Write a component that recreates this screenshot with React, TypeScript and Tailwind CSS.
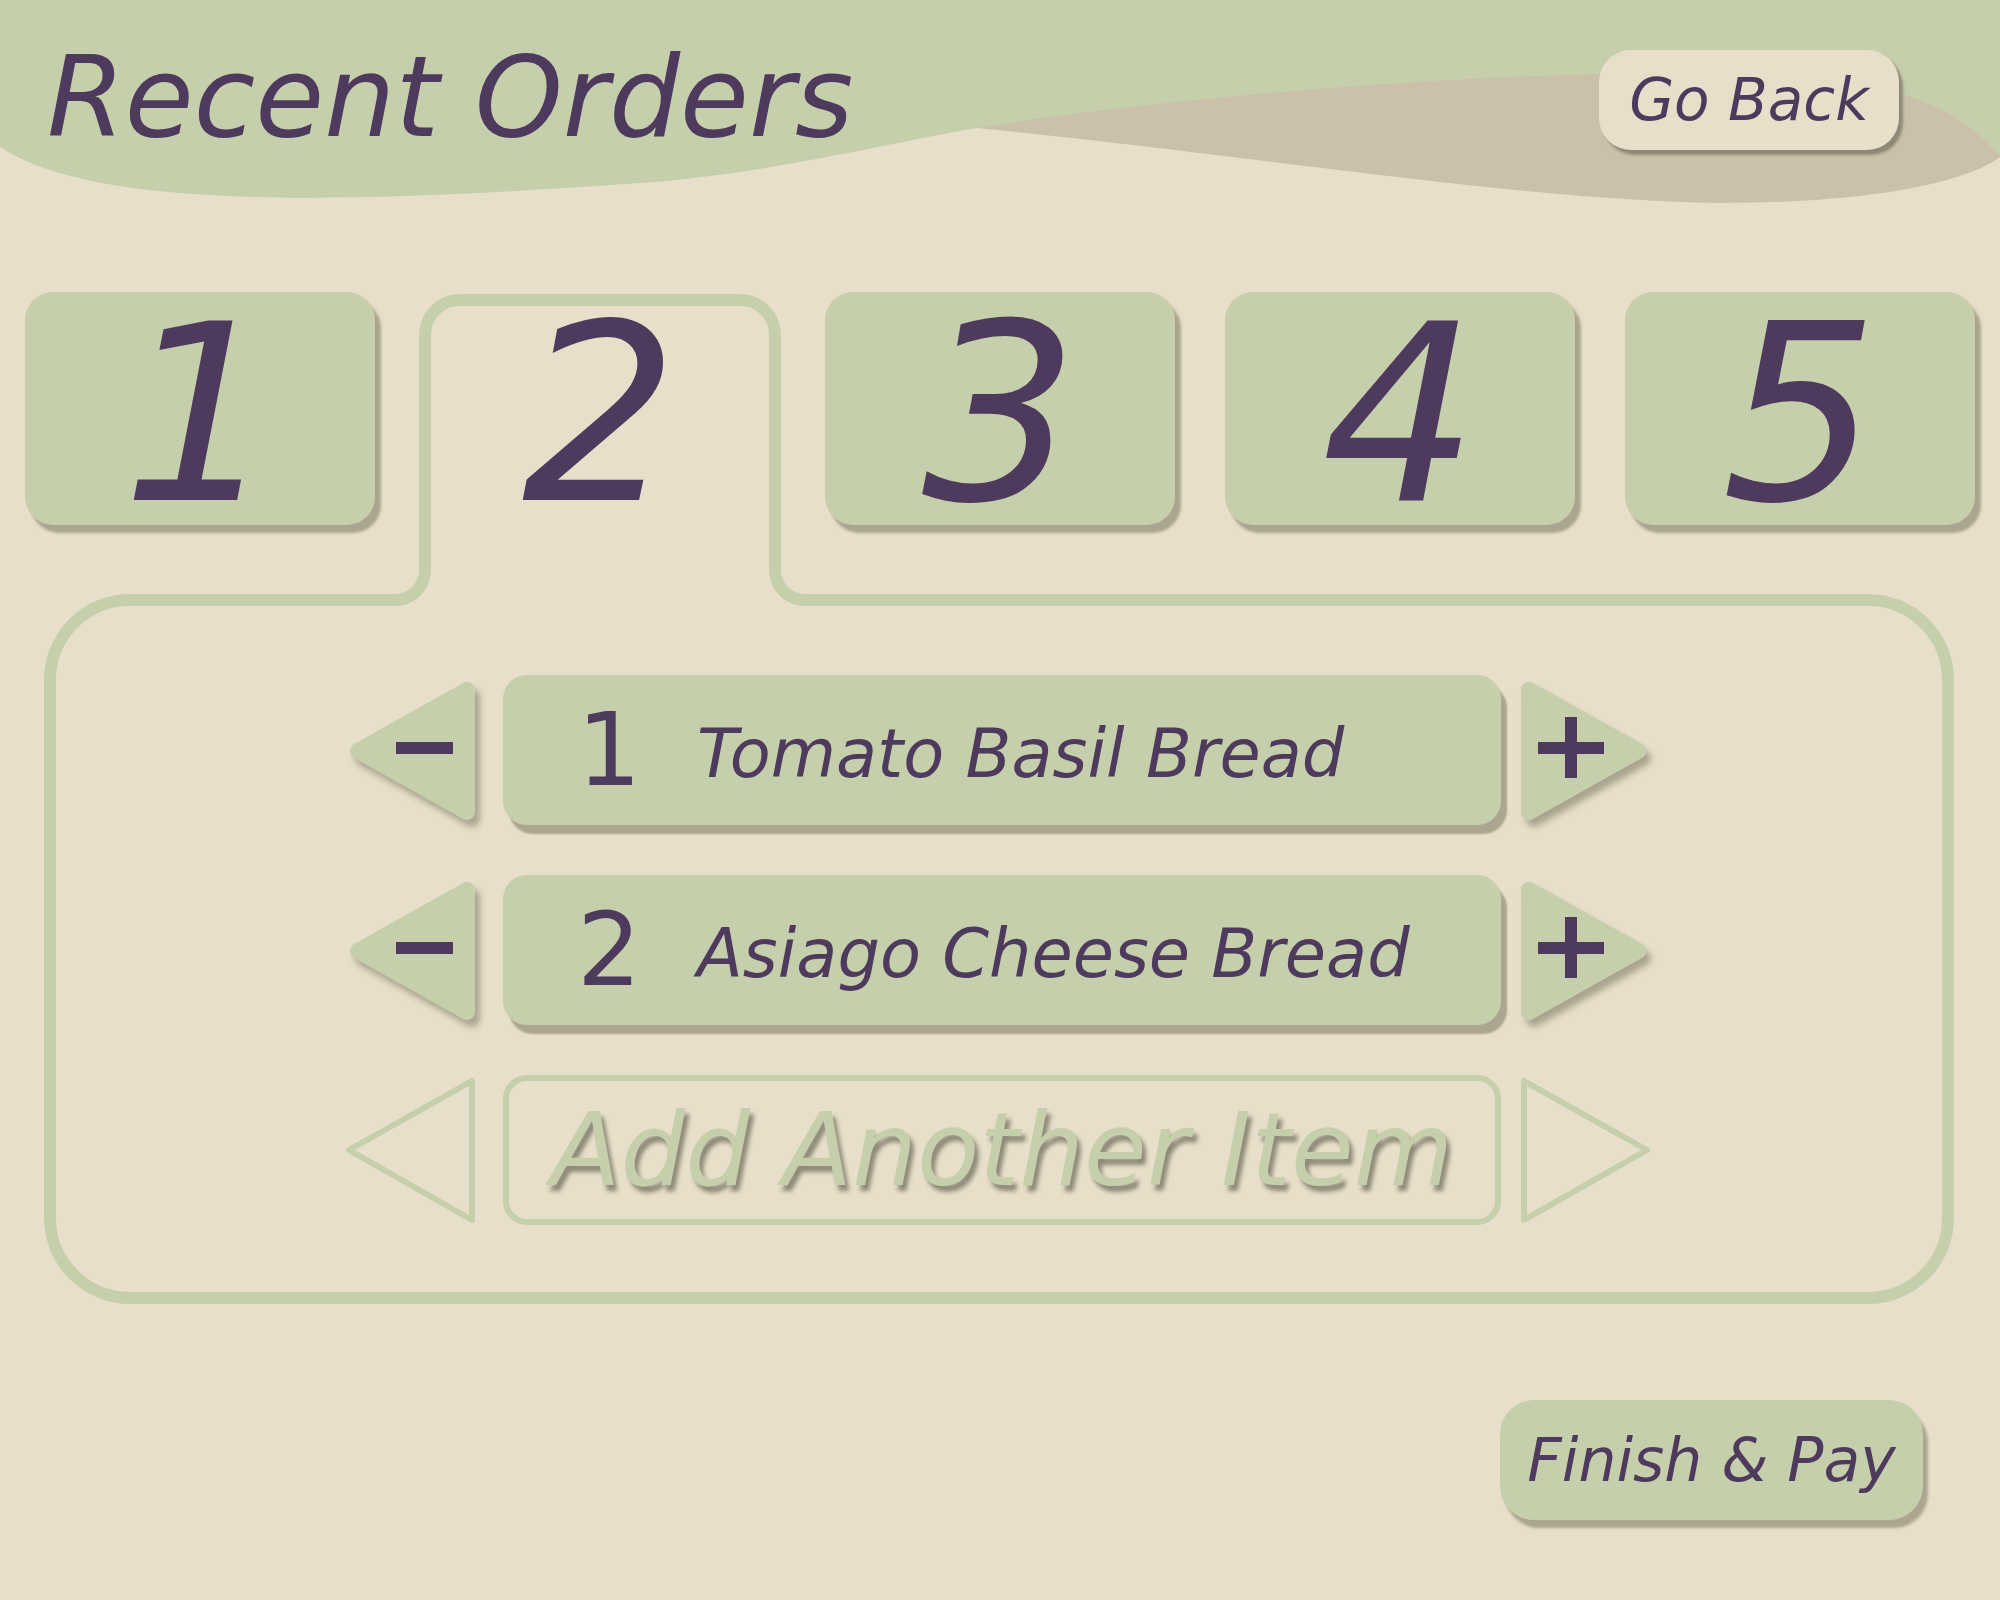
import { useState } from "react";

interface OrderLine {
  id: number;
  qty: number;
  name: string;
}

const TABS = [1, 2, 3, 4, 5];

function MinusArrow() {
  return (
    <svg
      className="h-[146px] w-[129px] shrink-0 drop-shadow-[5px_7px_3px_#aaa48f]"
      viewBox="0 0 129 146"
    >
      <polygon
        points="121,13 121,135 12,74"
        fill="#c5cfab"
        stroke="#c5cfab"
        strokeWidth={16}
        strokeLinejoin="round"
      />
      <rect x={50} y={65} width={57} height={12} fill="#4e3a5c" />
    </svg>
  );
}

function PlusArrow() {
  return (
    <svg
      className="h-[146px] w-[129px] shrink-0 drop-shadow-[5px_7px_3px_#aaa48f]"
      viewBox="0 0 129 146"
    >
      <polygon
        points="8,13 8,135 117,74"
        fill="#c5cfab"
        stroke="#c5cfab"
        strokeWidth={16}
        strokeLinejoin="round"
      />
      <rect x={17} y={65} width={66} height={12} fill="#4e3a5c" />
      <rect x={44} y={40} width={12} height={61} fill="#4e3a5c" />
    </svg>
  );
}

function EmptyArrow({ dir }: { dir: "left" | "right" }) {
  return (
    <svg className="h-[146px] w-[129px] shrink-0" viewBox="0 0 129 146">
      <polygon
        points={dir === "left" ? "126,4 126,143 3,73" : "3,4 3,143 126,73"}
        fill="none"
        stroke="#c5cfab"
        strokeWidth={6}
        strokeLinejoin="round"
      />
    </svg>
  );
}

export default function App() {
  const [activeTab, setActiveTab] = useState(2);
  const [lines, setLines] = useState<OrderLine[]>([
    { id: 1, qty: 1, name: "Tomato Basil Bread" },
    { id: 2, qty: 2, name: "Asiago Cheese Bread" },
  ]);

  function bump(id: number, by: number) {
    setLines((prev) =>
      prev.map((l) => (l.id === id ? { ...l, qty: Math.max(0, l.qty + by) } : l))
    );
  }

  return (
    <div className="relative h-[1600px] w-[2000px] overflow-hidden bg-[#e7dfca] font-['DejaVu_Sans',sans-serif] text-[#4e3a5c]">
      {/* Header with wave */}
      <div className="relative h-[280px]">
        <svg
          className="absolute inset-0 h-full w-full"
          viewBox="0 0 2000 280"
          preserveAspectRatio="none"
        >
          <path
            d="M976 128 L990 0 H2000 V157 C1970 180 1880 203 1720 203 C1520 200 1250 155 976 128 Z"
            fill="#cbc1aa"
          />
          <path
            d="M0 0 H2000 V157 C1960 105 1880 72 1720 72 C1450 72 1150 100 976 128 C880 145 760 175 640 183 C500 193 360 200 255 197 C140 194 50 180 0 147 Z"
            fill="#c5cfab"
          />
        </svg>
        <div className="relative flex items-start justify-between pl-[47px] pr-[101px] pt-[41px]">
          <h1 className="text-[112px] italic leading-none">Recent Orders</h1>
          <button className="mt-[9px] flex h-[100px] w-[300px] items-center justify-center rounded-[32px] bg-[#e7dfca] text-[58px] italic leading-none shadow-[4px_5px_3px_#8e8878]">
            Go Back
          </button>
        </div>
      </div>

      {/* Tabs + order panel */}
      <div className="relative h-[1040px]">
        <svg
          className="pointer-events-none absolute inset-0 h-full w-full"
          viewBox="0 280 2000 1040"
        >
          <path
            d="M50 680 A80 80 0 0 1 130 600 H395 A30 30 0 0 0 425 570 V335 A35 35 0 0 1 460 300 H740 A35 35 0 0 1 775 335 V570 A30 30 0 0 0 805 600 H1868 A80 80 0 0 1 1948 680 V1218 A80 80 0 0 1 1868 1298 H130 A80 80 0 0 1 50 1218 Z"
            fill="none"
            stroke="#c5cfab"
            strokeWidth={12}
          />
        </svg>

        <div className="relative flex gap-[50px] px-[25px] pt-[12px]">
          {TABS.map((n) => (
            <button
              key={n}
              onClick={() => setActiveTab(n)}
              className={
                n === activeTab
                  ? "flex h-[233px] w-[350px] items-center justify-center pt-[13px] text-[246px] italic leading-none"
                  : "flex h-[233px] w-[350px] items-center justify-center rounded-[28px] bg-[#c5cfab] pt-[13px] text-[246px] italic leading-none shadow-[6px_8px_3px_#aba48f]"
              }
            >
              {n}
            </button>
          ))}
        </div>

        <div className="relative mt-[150px] flex flex-col gap-[50px] pl-[346px]">
          {lines.map((line) => (
            <div key={line.id} className="flex h-[150px] items-center">
              <button onClick={() => bump(line.id, -1)}>
                <MinusArrow />
              </button>
              <div className="ml-[28px] flex h-[150px] w-[998px] items-center rounded-[24px] bg-[#c5cfab] pl-[74px] shadow-[6px_9px_2px_#aca58f]">
                <span className="w-[120px] text-[101px] leading-none">
                  {line.qty}
                </span>
                <span className="mt-[8px] text-[67px] italic leading-none">
                  {line.name}
                </span>
              </div>
              <button className="ml-[20px]" onClick={() => bump(line.id, 1)}>
                <PlusArrow />
              </button>
            </div>
          ))}

          <div className="flex h-[150px] items-center">
            <EmptyArrow dir="left" />
            <div className="ml-[28px] flex h-[150px] w-[998px] items-center justify-center rounded-[24px] border-[6px] border-[#c5cfab] text-[102px] italic leading-none text-[#c5cfab] [text-shadow:4px_6px_4px_#8f8a78]">
              Add Another Item
            </div>
            <div className="ml-[20px]">
              <EmptyArrow dir="right" />
            </div>
          </div>
        </div>
      </div>

      {/* Footer */}
      <div className="mt-[80px] flex justify-end pr-[77px]">
        <button className="flex h-[120px] w-[423px] items-center justify-center rounded-[34px] bg-[#c5cfab] text-[60px] italic leading-none shadow-[5px_8px_3px_#aca58f]">
          Finish &amp; Pay
        </button>
      </div>
    </div>
  );
}
